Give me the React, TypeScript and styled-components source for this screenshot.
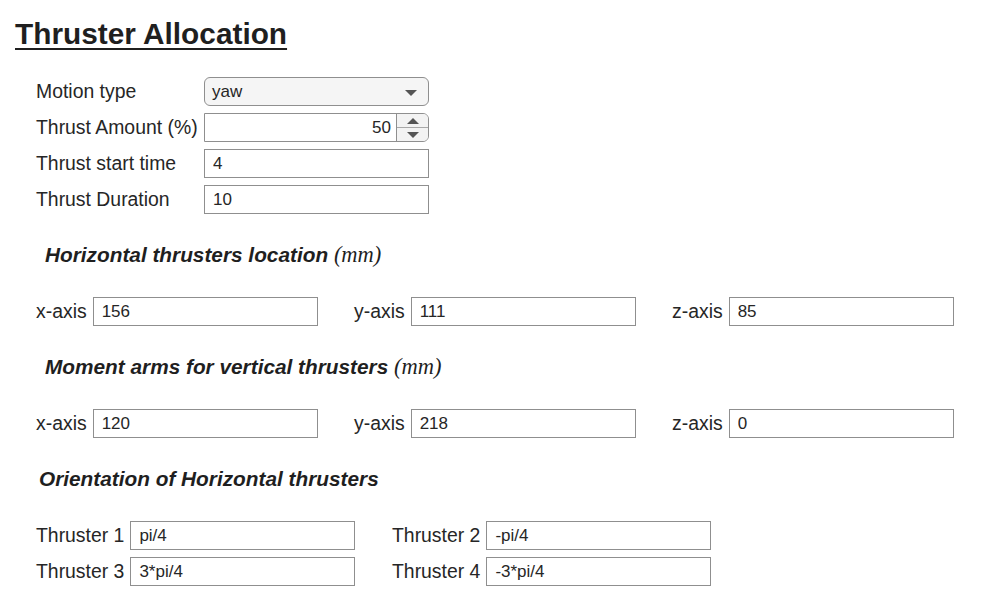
import styled, { createGlobalStyle } from 'styled-components';

const GlobalStyle = createGlobalStyle`
  html, body {
    margin: 0;
    padding: 0;
    background: #ffffff;
  }
`;

const axisLocation = [
  { label: 'x-axis', value: '156' },
  { label: 'y-axis', value: '111' },
  { label: 'z-axis', value: '85' },
];

const momentArms = [
  { label: 'x-axis', value: '120' },
  { label: 'y-axis', value: '218' },
  { label: 'z-axis', value: '0' },
];

const orientations = [
  { label: 'Thruster 1', value: 'pi/4' },
  { label: 'Thruster 2', value: '-pi/4' },
  { label: 'Thruster 3', value: '3*pi/4' },
  { label: 'Thruster 4', value: '-3*pi/4' },
];

function App() {
  return (
    <Page>
      <GlobalStyle />
      <Title>Thruster Allocation</Title>

      <FormGrid>
        <Label>Motion type</Label>
        <Dropdown>
          <span>yaw</span>
          <Caret />
        </Dropdown>

        <Label>Thrust Amount (%)</Label>
        <Spinner>
          <SpinInput defaultValue="50" />
          <SpinButtons>
            <SpinHalf>
              <Arrow $up />
            </SpinHalf>
            <SpinHalf $bottom>
              <Arrow />
            </SpinHalf>
          </SpinButtons>
        </Spinner>

        <Label>Thrust start time</Label>
        <TextBox defaultValue="4" />

        <Label>Thrust Duration</Label>
        <TextBox defaultValue="10" />
      </FormGrid>

      <SectionHeading>
        Horizontal thrusters location <Unit>(mm)</Unit>
      </SectionHeading>
      <AxisRow>
        {axisLocation.map((f) => (
          <Field key={f.label}>
            <Label>{f.label}</Label>
            <TextBox defaultValue={f.value} />
          </Field>
        ))}
      </AxisRow>

      <SectionHeading>
        Moment arms for vertical thrusters <Unit>(mm)</Unit>
      </SectionHeading>
      <AxisRow>
        {momentArms.map((f) => (
          <Field key={f.label}>
            <Label>{f.label}</Label>
            <TextBox defaultValue={f.value} />
          </Field>
        ))}
      </AxisRow>

      <SectionHeading $indent={39}>Orientation of Horizontal thrusters</SectionHeading>
      <ThrusterGrid>
        {orientations.map((f) => (
          <Field key={f.label}>
            <Label>{f.label}</Label>
            <TextBox defaultValue={f.value} />
          </Field>
        ))}
      </ThrusterGrid>
    </Page>
  );
}

export default App;

const Page = styled.div`
  padding: 16px 0 30px 0;
  font-family: 'Liberation Sans', Arial, sans-serif;
  color: #222222;
`;

const Title = styled.h1`
  margin: 0 0 0 15px;
  font-size: 29.8px;
  line-height: 36px;
  font-weight: 700;
  color: #1f1f1f;
  text-decoration: underline;
  text-decoration-thickness: 2px;
  text-underline-offset: 4px;
`;

const FormGrid = styled.div`
  display: grid;
  grid-template-columns: 168px 225px;
  grid-auto-rows: 29px;
  row-gap: 7px;
  align-items: center;
  margin: 25px 0 0 36px;
`;

const Label = styled.label`
  font-size: 19.4px;
  white-space: nowrap;
  color: #262626;
`;

const TextBox = styled.input`
  box-sizing: border-box;
  width: 225px;
  height: 29px;
  margin: 0;
  padding: 0 8px;
  border: 1px solid #8f8f8f;
  border-radius: 0;
  background: #ffffff;
  color: #262626;
  font-family: 'Liberation Sans', Arial, sans-serif;
  font-size: 17px;
  outline: none;
`;

const Dropdown = styled.div`
  box-sizing: border-box;
  display: flex;
  align-items: center;
  justify-content: space-between;
  width: 225px;
  height: 29px;
  padding: 0 11px 0 7px;
  border: 1px solid #8f8f8f;
  border-radius: 6px;
  background: #f5f5f5;
  font-size: 17px;
  color: #262626;
`;

const Caret = styled.span`
  width: 0;
  height: 0;
  border-left: 6px solid transparent;
  border-right: 6px solid transparent;
  border-top: 6px solid #555555;
  margin-top: 2px;
`;

const Spinner = styled.div`
  box-sizing: border-box;
  display: flex;
  width: 225px;
  height: 29px;
  border: 1px solid #8f8f8f;
  border-radius: 0 6px 6px 0;
  overflow: hidden;
  background: #ffffff;
`;

const SpinInput = styled.input`
  flex: 1;
  min-width: 0;
  margin: 0;
  padding: 0 5px 0 8px;
  border: none;
  text-align: right;
  font-family: 'Liberation Sans', Arial, sans-serif;
  font-size: 17px;
  color: #262626;
  outline: none;
  background: transparent;
`;

const SpinButtons = styled.div`
  display: flex;
  flex-direction: column;
  width: 31px;
  border-left: 1px solid #8f8f8f;
  background: #f3f3f3;
`;

const SpinHalf = styled.div<{ $bottom?: boolean }>`
  flex: 1;
  display: flex;
  align-items: center;
  justify-content: center;
  border-top: ${(p) => (p.$bottom ? '1px solid #a8a8a8' : 'none')};
`;

const Arrow = styled.span<{ $up?: boolean }>`
  width: 0;
  height: 0;
  border-left: 6px solid transparent;
  border-right: 6px solid transparent;
  border-bottom: ${(p) => (p.$up ? '6px solid #555555' : 'none')};
  border-top: ${(p) => (p.$up ? 'none' : '6px solid #555555')};
`;

const SectionHeading = styled.h2<{ $indent?: number }>`
  margin: 29px 0 0 ${(p) => p.$indent ?? 45}px;
  font-size: 20.8px;
  line-height: 24px;
  font-weight: 700;
  font-style: italic;
  color: #1f1f1f;
`;

const Unit = styled.span`
  font-family: 'Liberation Serif', 'Times New Roman', serif;
  font-weight: 400;
  font-size: 22.5px;
`;

const AxisRow = styled.div`
  display: grid;
  grid-template-columns: repeat(3, 318px);
  margin: 30px 0 0 36px;
`;

const ThrusterGrid = styled.div`
  display: grid;
  grid-template-columns: repeat(2, 356px);
  row-gap: 7px;
  margin: 30px 0 0 36px;
`;

const Field = styled.div`
  display: flex;
  align-items: center;
  gap: 6px;
`;
